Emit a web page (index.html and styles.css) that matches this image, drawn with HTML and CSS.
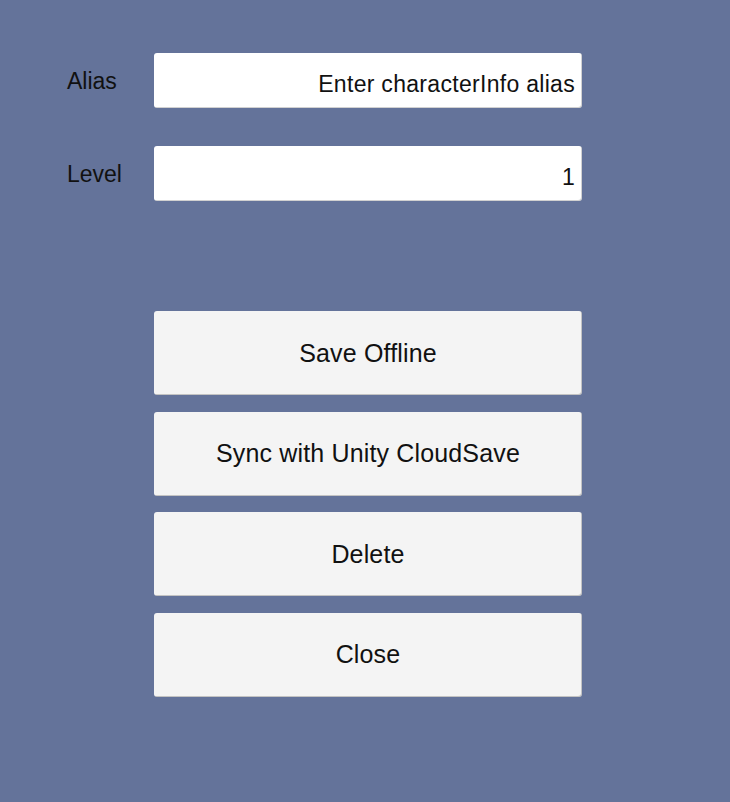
FILE: index.html
```html
<!DOCTYPE html>
<html>
<head>
<meta charset="utf-8">
<link rel="stylesheet" href="styles.css">
</head>
<body>
<div class="panel">
  <div class="field-row">
    <label class="field-label">Alias</label>
    <div class="field-input placeholder">Enter characterInfo alias</div>
  </div>
  <div class="field-row">
    <label class="field-label">Level</label>
    <div class="field-input">1</div>
  </div>
  <div class="actions">
    <button class="action-btn">Save Offline</button>
    <button class="action-btn">Sync with Unity CloudSave</button>
    <button class="action-btn">Delete</button>
    <button class="action-btn">Close</button>
  </div>
</div>
</body>
</html>
```
FILE: styles.css
```css
html, body {
  margin: 0;
  padding: 0;
  width: 730px;
  height: 802px;
  background: #64739a;
  font-family: "Liberation Sans", Arial, sans-serif;
  overflow: hidden;
}

.panel {
  padding-top: 53px;
  padding-left: 67px;
  display: flex;
  flex-direction: column;
}

.field-row {
  display: flex;
  align-items: center;
  height: 55px;
  margin-bottom: 38px;
}

.field-label {
  width: 87px;
  font-size: 23px;
  line-height: 26px;
  color: #111;
}

.field-input {
  box-sizing: border-box;
  width: 428px;
  height: 55px;
  background: #ffffff;
  border-radius: 3px;
  box-shadow: inset -1px -1px 0 rgba(0, 0, 0, 0.18);
  display: flex;
  align-items: center;
  justify-content: flex-end;
  padding: 8px 7px 0 0;
  font-size: 23px;
  letter-spacing: 0.3px;
  color: #111;
}

.actions {
  margin-top: 72px;
  margin-left: 87px;
  display: flex;
  flex-direction: column;
  gap: 16.5px;
}

.action-btn {
  box-sizing: border-box;
  width: 428px;
  height: 84px;
  background: #f4f4f4;
  border: none;
  border-radius: 3px;
  box-shadow: inset -1px -1px 0 rgba(0, 0, 0, 0.2);
  font-family: "Liberation Sans", Arial, sans-serif;
  font-size: 25px;
  letter-spacing: 0.15px;
  color: #111;
  padding: 0;
  text-align: center;
}
```
